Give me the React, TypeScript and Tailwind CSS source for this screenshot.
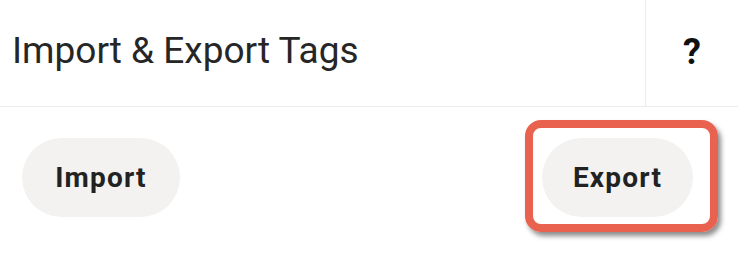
import React from 'react';

export default function App() {
  return (
    <div className="w-[738px] h-[276px] bg-white overflow-hidden" style={{ fontFamily: 'Roboto, "Liberation Sans", sans-serif' }}>
      <div className="flex h-[107px] border-b border-[#ececec]">
        <div className="flex-1 flex items-center pl-[12px] text-[37px] text-[#262626] pb-[4px]">
          Import &amp; Export Tags
        </div>
        <div className="w-[93px] border-l border-[#ececec] flex items-center justify-center text-[36px] font-bold text-[#111] pb-[2px]">
          ?
        </div>
      </div>
      <div className="flex justify-between items-start pl-[22px] pr-[45px] pt-[31px]">
        <button className="w-[158px] h-[79px] rounded-full bg-[#f3f2f1] text-[28px] font-bold text-[#222] tracking-[1.2px]">
          Import
        </button>
        <div className="relative">
          <button className="w-[151px] h-[79px] rounded-full bg-[#f3f2f1] text-[28px] font-bold text-[#222] tracking-[1.2px]">
            Export
          </button>
          <div className="absolute left-[-17px] top-[-18px] w-[193px] h-[112px] rounded-[16px] border-[8px] border-[#e8624f] shadow-[3px_4px_5px_rgba(0,0,0,0.45)]" />
        </div>
      </div>
    </div>
  );
}
